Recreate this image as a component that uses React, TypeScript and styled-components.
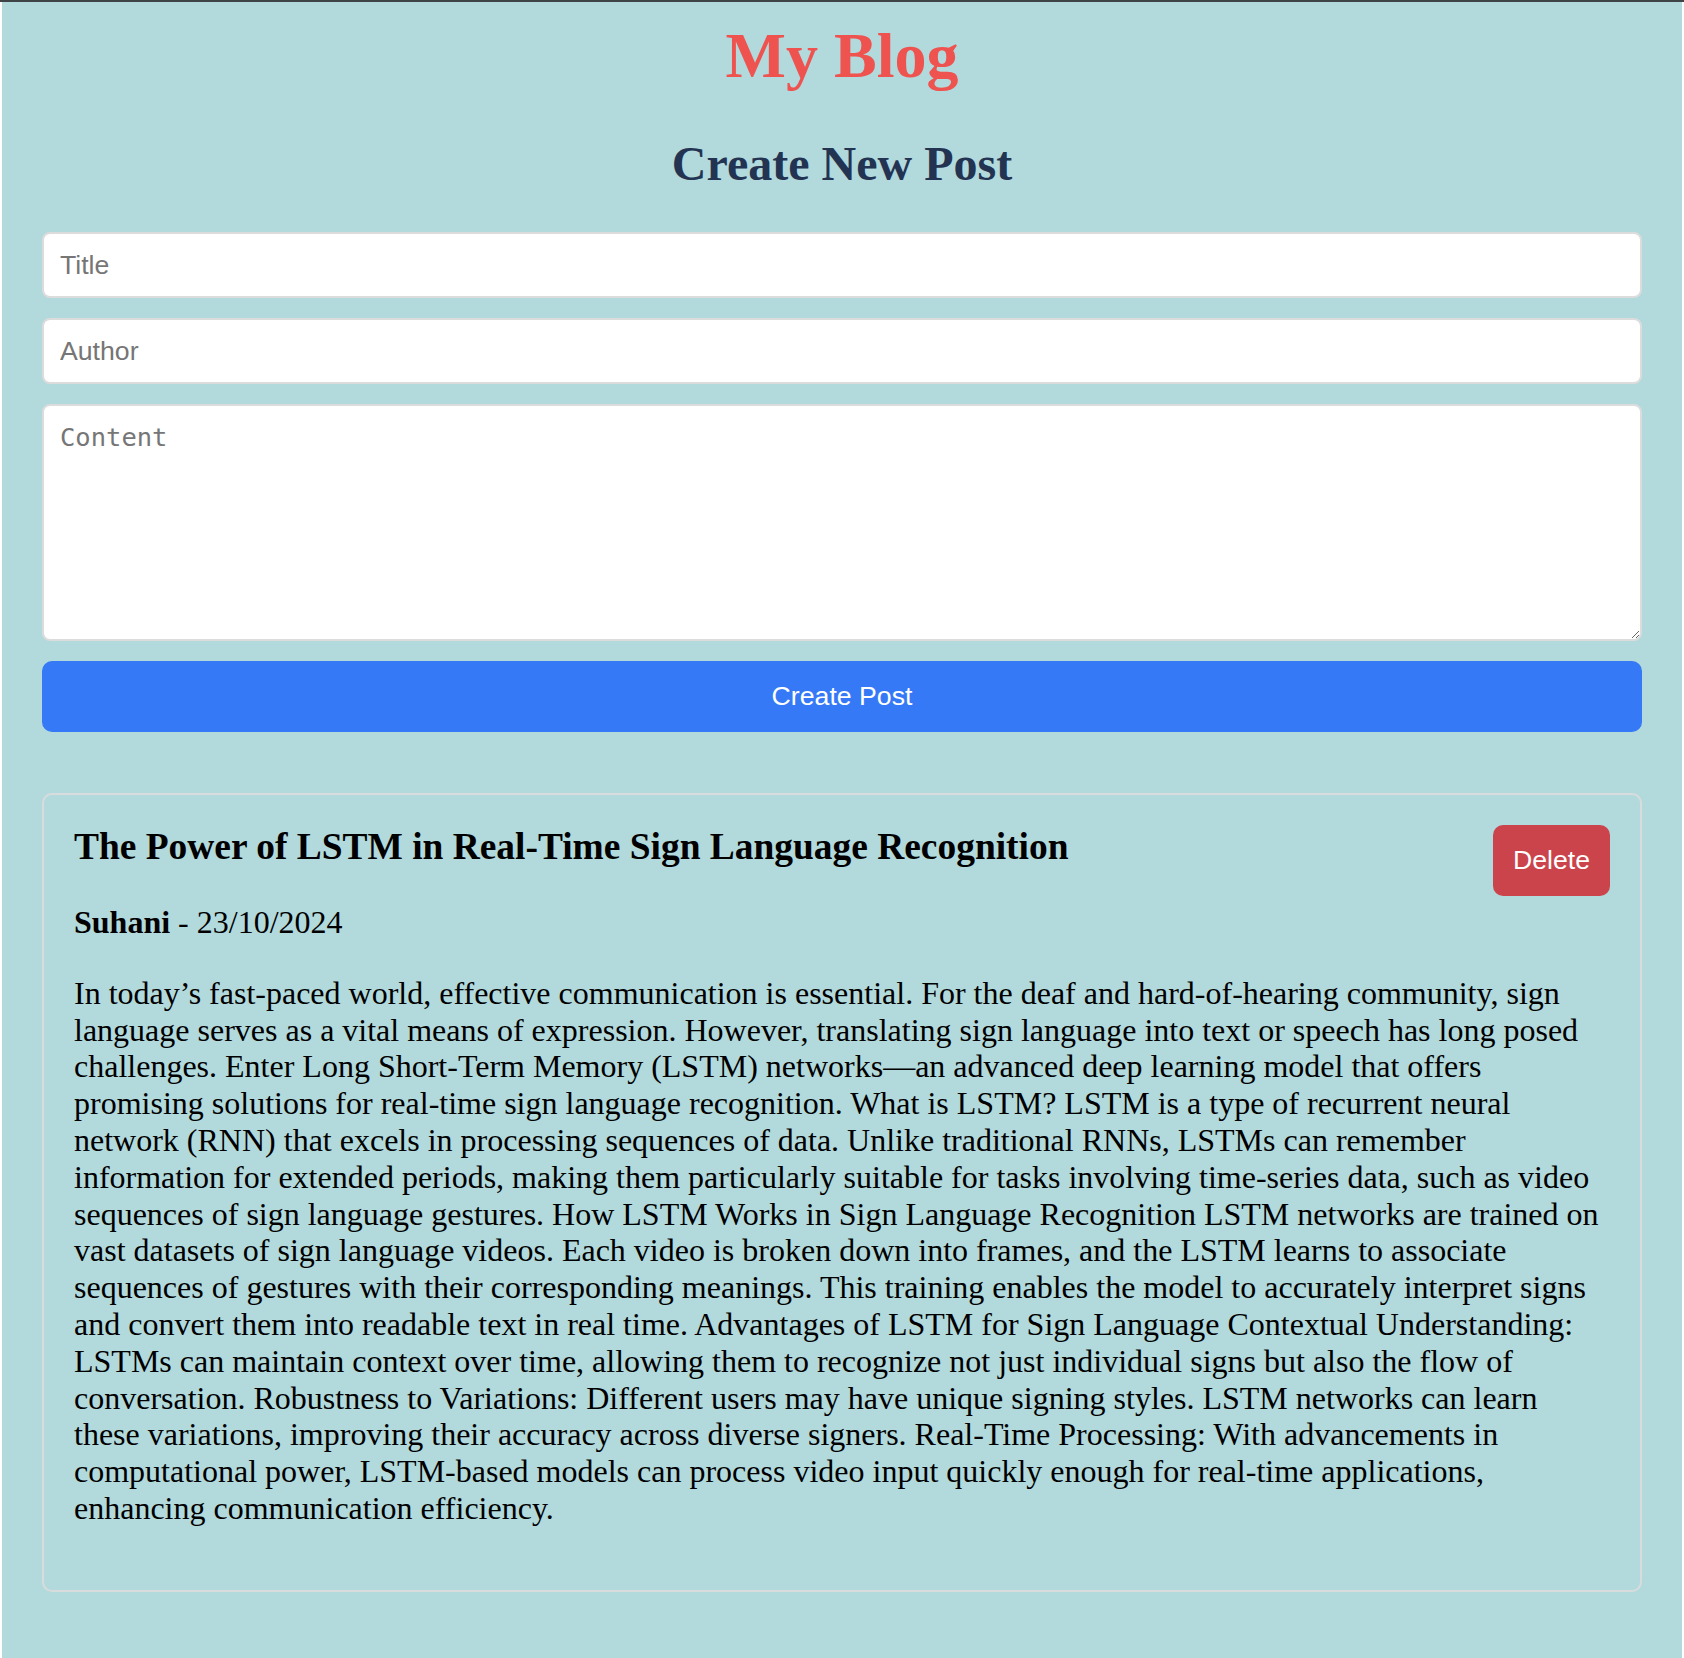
import React from "react";
import styled, { createGlobalStyle } from "styled-components";

const GlobalStyle = createGlobalStyle`
  html, body {
    margin: 0;
    padding: 0;
  }
  body {
    background: #ffffff;
    border-top: 2px solid #3e4346;
    font-family: "Liberation Serif", "Times New Roman", serif;
  }
  * {
    box-sizing: border-box;
  }
`;

const Page = styled.div`
  margin: 0 2px;
  min-height: 1656px;
  background: #b2d9dc;
  padding: 17px 40px 40px;
`;

const SiteTitle = styled.h1`
  margin: 0 0 43px;
  text-align: center;
  font-family: "Liberation Serif", "Times New Roman", serif;
  font-size: 64px;
  line-height: 74px;
  font-weight: 700;
  color: #ef5350;
`;

const SectionTitle = styled.h2`
  margin: 0 0 41px;
  text-align: center;
  font-family: "Liberation Serif", "Times New Roman", serif;
  font-size: 48px;
  line-height: 55px;
  font-weight: 700;
  color: #233453;
`;

const Form = styled.form`
  display: flex;
  flex-direction: column;
  gap: 20px;
  margin-bottom: 61px;
`;

const fieldBase = `
  width: 100%;
  display: block;
  border: 2px solid #dcdcdc;
  border-radius: 8px;
  background: #ffffff;
  padding: 16px;
  color: #222;
  outline: none;
  &::placeholder {
    color: #767676;
    opacity: 1;
  }
`;

const TextInput = styled.input`
  ${fieldBase}
  height: 66px;
  font-family: "Liberation Sans", Arial, sans-serif;
  font-size: 26.67px;
  line-height: 30px;
`;

const ContentArea = styled.textarea`
  ${fieldBase}
  height: 237px;
  font-family: "DejaVu Sans Mono", "Liberation Mono", monospace;
  font-size: 25.5px;
  line-height: 30px;
  resize: vertical;
`;

const Button = styled.button<{ $variant: "primary" | "danger" }>`
  border: none;
  border-radius: 10px;
  color: #ffffff;
  font-family: "Liberation Sans", Arial, sans-serif;
  font-size: 26.67px;
  line-height: 31px;
  padding: 20px;
  cursor: pointer;
  background: ${(p) => (p.$variant === "primary" ? "#3579f6" : "#cb444b")};
  width: ${(p) => (p.$variant === "primary" ? "100%" : "auto")};
  flex-shrink: 0;
`;

const PostCard = styled.article`
  border: 2px solid #d9dcdc;
  border-radius: 10px;
  padding: 30px 30px 31px;
`;

const PostHeader = styled.div`
  display: flex;
  justify-content: space-between;
  align-items: flex-start;
  gap: 20px;
`;

const PostTitle = styled.h3`
  margin: 0;
  font-family: "Liberation Serif", "Times New Roman", serif;
  font-size: 37.44px;
  line-height: 43px;
  font-weight: 700;
  color: #000;
`;

const Meta = styled.p`
  margin: 8px 0 34px;
  font-size: 32px;
  line-height: 36.8px;
  color: #000;
`;

const Body = styled.p`
  margin: 0 0 32px;
  font-size: 32px;
  line-height: 36.8px;
  color: #000;
`;

const content =
  "In today’s fast-paced world, effective communication is essential. For the deaf and hard-of-hearing community, sign language serves as a vital means of expression. However, translating sign language into text or speech has long posed challenges. Enter Long Short-Term Memory (LSTM) networks—an advanced deep learning model that offers promising solutions for real-time sign language recognition. What is LSTM? LSTM is a type of recurrent neural network (RNN) that excels in processing sequences of data. Unlike traditional RNNs, LSTMs can remember information for extended periods, making them particularly suitable for tasks involving time-series data, such as video sequences of sign language gestures. How LSTM Works in Sign Language Recognition LSTM networks are trained on vast datasets of sign language videos. Each video is broken down into frames, and the LSTM learns to associate sequences of gestures with their corresponding meanings. This training enables the model to accurately interpret signs and convert them into readable text in real time. Advantages of LSTM for Sign Language Contextual Understanding: LSTMs can maintain context over time, allowing them to recognize not just individual signs but also the flow of conversation. Robustness to Variations: Different users may have unique signing styles. LSTM networks can learn these variations, improving their accuracy across diverse signers. Real-Time Processing: With advancements in computational power, LSTM-based models can process video input quickly enough for real-time applications, enhancing communication efficiency.";

export default function App() {
  return (
    <>
      <GlobalStyle />
      <Page>
        <SiteTitle>My Blog</SiteTitle>
        <SectionTitle>Create New Post</SectionTitle>
        <Form onSubmit={(e) => e.preventDefault()}>
          <TextInput type="text" placeholder="Title" />
          <TextInput type="text" placeholder="Author" />
          <ContentArea placeholder="Content" />
          <Button type="submit" $variant="primary">
            Create Post
          </Button>
        </Form>
        <PostCard>
          <PostHeader>
            <PostTitle>The Power of LSTM in Real-Time Sign Language Recognition</PostTitle>
            <Button type="button" $variant="danger">
              Delete
            </Button>
          </PostHeader>
          <Meta>
            <strong>Suhani</strong> - 23/10/2024
          </Meta>
          <Body>{content}</Body>
        </PostCard>
      </Page>
    </>
  );
}
